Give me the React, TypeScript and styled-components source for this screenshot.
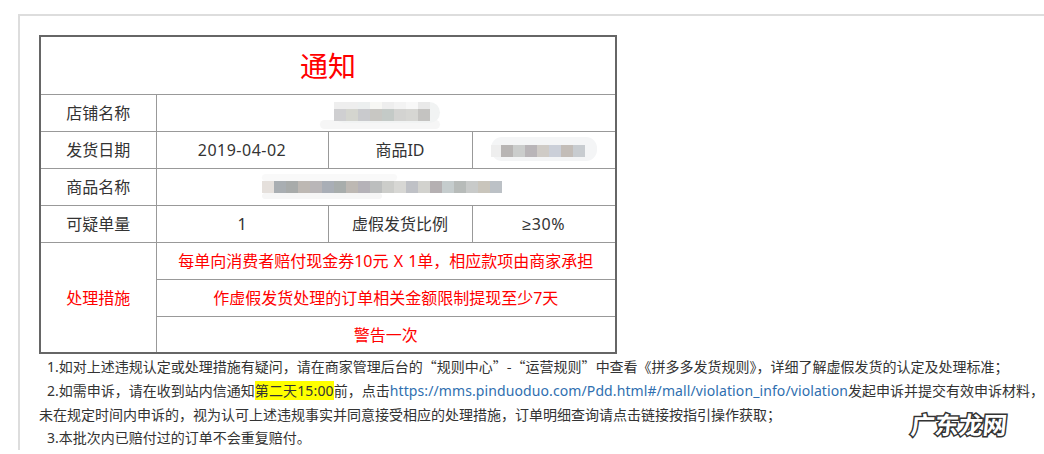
import React from "react";
import styled, { createGlobalStyle } from "styled-components";

const GlobalStyle = createGlobalStyle`
  html, body {
    margin: 0;
    background: #fff;
    overflow: hidden;
  }
  body {
    font-family: "Noto Sans", "Noto Sans CJK SC", sans-serif;
    color: #333;
  }
`;

const Page = styled.div`
  width: 1044px;
  height: 454px;
  overflow: hidden;
  position: relative;
  padding: 14px 0 0 18px;
  box-sizing: border-box;
`;

const Panel = styled.div`
  width: 1060px;
  box-sizing: border-box;
  border: 1px solid #ddd;
  border-width: 2px 0 0 2px;
  padding: 19px 0 0 19px;
`;

const NoticeTable = styled.table`
  width: 578px;
  table-layout: fixed;
  border-collapse: collapse;
  border: 2px solid #666;
`;

const Cell = styled.td<{ $danger?: boolean }>`
  box-sizing: border-box;
  border: 1px solid #999;
  padding: 1px 0 0;
  height: 37px;
  text-align: center;
  font-size: 16px;
  line-height: 22px;
  word-spacing: 1px;
  color: ${(p) => (p.$danger ? "#f00" : "#333")};
`;

const TitleCell = styled(Cell)`
  height: 58px;
  padding: 2px 0 0;
  font-size: 28px;
  color: #f00;
`;

const PatchCell = styled(Cell)`
  padding: 0;
`;

const Mosaic = styled.svg<{ $left: number }>`
  display: block;
  margin-left: ${(p) => p.$left}px;
`;

const DateText = styled.span`
  letter-spacing: 0.5px;
`;

const Ratio = styled.span`
  letter-spacing: 0.6px;
`;

const GeSign = styled.span`
  font-family: "Liberation Sans", sans-serif;
`;

const Notes = styled.div`
  width: 1010px;
  font-size: 14px;
  line-height: 24px;
  color: #333;
`;

const NoteLine = styled.p`
  margin: 0;
  text-indent: 8px;

  &:last-child {
    margin-top: -1px;
  }
`;

const Quoted = styled.span`
  font-family: "Noto Sans CJK SC", sans-serif;
`;

const Mark = styled.span`
  background: #ff0;
  letter-spacing: 0.15px;
`;

const LinkText = styled.span`
  color: #2f6fb0;
  letter-spacing: 0.1px;
`;

const Watermark = styled.div`
  position: absolute;
  left: 911px;
  top: 408px;
  font-size: 24px;
  line-height: 34px;
  font-weight: 700;
  color: #fff;
  -webkit-text-stroke: 3px #333;
  paint-order: stroke fill;
  transform: skewX(-6deg);
`;

type Block = [number, number, number, number, string];

const row = (colors: string[], x: number, y: number, h: number): Block[] =>
  colors.map((c, i) => [x + i * 12, y, 12, h, c]);

// store name: cell starts at x=157, row at y=95
const storeBlocks: Block[] = [
  [163, 25, 120, 9, "#f6f6f6"],
  [177, 7, 106, 21, "#f1f3f3"],
  ...row(["#eeeeee", "#eeeeee", "#ecefef", "#f7f7f4", "#eeeeee", "#f3f3f3", "#f8f8f8", "#e9e9e9"], 177, 7, 7),
  ...row(["#cfcfd1", "#d4d5cf", "#c9cacd", "#c8c7c3", "#c4cac7", "#d3d3d1", "#d6d6d3", "#c4c3c1"], 177, 14, 12),
];

const idBlocks: Block[] = [
  [0, 5, 106, 24, "#f4f5f6"],
  ...row(["#eeeeee"], 0, 13, 12),
  ...row(["#b8b5b4", "#cbcdcc", "#b9b5b8", "#cfcbc6", "#cbcfd8", "#c3bdb8", "#c8ccd0"], 10, 13, 12),
];

const nameBlocks: Block[] = [
  [105, 5, 135, 7, "#f9f9f9"],
  [105, 24, 120, 6, "#f6f6f6"],
  ...row([
    "#e5e0dc", "#a9aeb2", "#a8abaa", "#bdb8b3", "#b9b6b8", "#a9aeb6", "#a8adac",
    "#bdb8b3", "#b5b2b8", "#bcbebe", "#cccdca", "#d7d7d4", "#bfc1c6", "#d2d2ce",
    "#b5b0b2", "#c5cccd", "#b7bbb9", "#c8cac9", "#c9c5bc", "#bcc1c6",
  ], 105, 12, 12),
];

const MosaicPatch = ({ blocks, width, left }: { blocks: Block[]; width: number; left: number }) => (
  <Mosaic $left={left} width={width} height={36} viewBox={`0 0 ${width} 36`}>
    {blocks.map(([x, y, w, h, c], i) => (
      <rect key={i} x={x} y={y} width={w} height={h} fill={c} rx={w > 30 ? Math.min(h / 2, 11) : 0} />
    ))}
  </Mosaic>
);

export default function App() {
  return (
    <Page>
      <GlobalStyle />
      <Panel>
        <NoticeTable>
          <colgroup>
            <col style={{ width: 116 }} />
            <col style={{ width: 172 }} />
            <col style={{ width: 144 }} />
            <col />
          </colgroup>
          <tbody>
            <tr>
              <TitleCell colSpan={4}>通知</TitleCell>
            </tr>
            <tr>
              <Cell>店铺名称</Cell>
              <PatchCell colSpan={3}>
                <MosaicPatch blocks={storeBlocks} width={300} left={0} />
              </PatchCell>
            </tr>
            <tr>
              <Cell>发货日期</Cell>
              <Cell><DateText>2019-04-02</DateText></Cell>
              <Cell>商品ID</Cell>
              <PatchCell>
                <MosaicPatch blocks={idBlocks} width={106} left={18} />
              </PatchCell>
            </tr>
            <tr>
              <Cell>商品名称</Cell>
              <PatchCell colSpan={3}>
                <MosaicPatch blocks={nameBlocks} width={350} left={0} />
              </PatchCell>
            </tr>
            <tr>
              <Cell>可疑单量</Cell>
              <Cell>1</Cell>
              <Cell>虚假发货比例</Cell>
              <Cell><Ratio><GeSign>≥</GeSign>30%</Ratio></Cell>
            </tr>
            <tr>
              <Cell $danger rowSpan={3}>处理措施</Cell>
              <Cell $danger colSpan={3}>每单向消费者赔付现金券10元 X 1单，相应款项由商家承担</Cell>
            </tr>
            <tr>
              <Cell $danger colSpan={3}>作虚假发货处理的订单相关金额限制提现至少7天</Cell>
            </tr>
            <tr>
              <Cell $danger colSpan={3}>警告一次</Cell>
            </tr>
          </tbody>
        </NoticeTable>
        <Notes>
          <NoteLine>1.如对上述违规认定或处理措施有疑问，请在商家管理后台的<Quoted>“规则中心”-“运营规则”</Quoted>中查看《拼多多发货规则》，详细了解虚假发货的认定及处理标准；</NoteLine>
          <NoteLine>
            2.如需申诉，请在收到站内信通知<Mark>第二天15:00</Mark>前，点击<LinkText>https://mms.pinduoduo.com/Pdd.html#/mall/violation_info/violation</LinkText>发起申诉并提交有效申诉材料，未在规定时间内申诉的，视为认可上述违规事实并同意接受相应的处理措施，订单明细查询请点击链接按指引操作获取；
          </NoteLine>
          <NoteLine>3.本批次内已赔付过的订单不会重复赔付。</NoteLine>
        </Notes>
      </Panel>
      <Watermark>广东龙网</Watermark>
    </Page>
  );
}
